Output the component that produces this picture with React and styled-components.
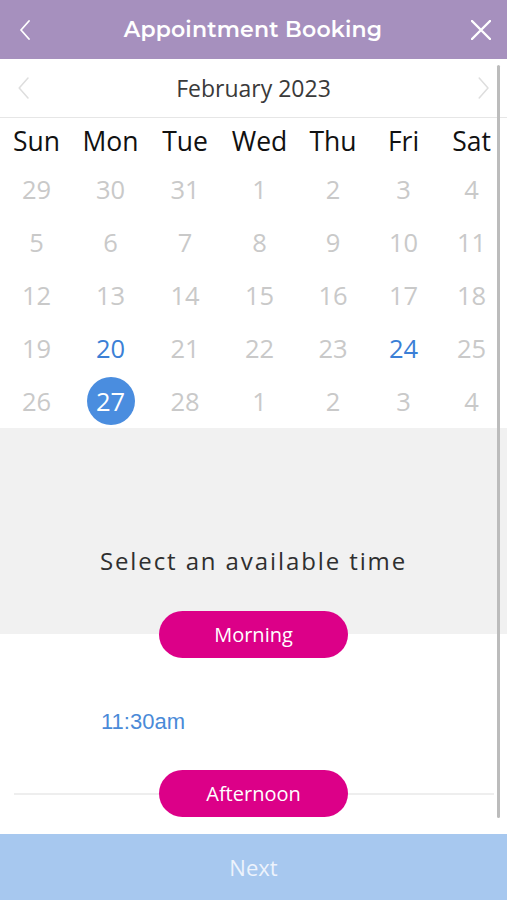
import React from "react";
import styled, { createGlobalStyle } from "styled-components";

const GlobalStyle = createGlobalStyle`
  html, body {
    margin: 0;
    padding: 0;
    background: #ffffff;
  }
  body {
    font-family: "Open Sans", "Liberation Sans", sans-serif;
  }
`;

const Screen = styled.div`
  position: relative;
  width: 507px;
  height: 900px;
  display: flex;
  flex-direction: column;
  overflow: hidden;
  background: #ffffff;
`;

const Header = styled.div`
  height: 59px;
  flex: none;
  display: flex;
  align-items: center;
  justify-content: space-between;
  padding: 0 14px 0 13px;
  background-color: #a690be;
  color: #ffffff;
`;

const HeaderTitle = styled.div`
  font-family: "Montserrat", "Lato", "Open Sans", sans-serif;
  font-size: 22px;
  font-weight: 600;
  letter-spacing: 0.2px;
`;

const IconButton = styled.div`
  width: 24px;
  height: 24px;
  display: flex;
  align-items: center;
  justify-content: center;
`;

const Body = styled.div`
  flex: none;
  display: flex;
  flex-direction: column;
`;

const MonthBar = styled.div`
  height: 58px;
  display: flex;
  align-items: center;
  justify-content: space-between;
  padding: 0 17px 0 17px;
  border-bottom: 1px solid #e6e6e6;
`;

const MonthLabel = styled.div`
  font-size: 23px;
  color: #3a3a3a;
`;

const Calendar = styled.div`
  display: grid;
  grid-template-columns: 73fr 75fr 74fr 75fr 72fr 69fr 67fr;
  width: 505px;
`;

const WeekDay = styled.div`
  height: 45px;
  display: flex;
  align-items: center;
  justify-content: center;
  font-size: 26.5px;
  color: #111111;
`;

const DayCell = styled.div`
  height: 52.8px;
  display: flex;
  align-items: center;
  justify-content: center;
`;

const DayNum = styled.div`
  width: 48px;
  height: 48px;
  border-radius: 50%;
  display: flex;
  align-items: center;
  justify-content: center;
  font-size: 25.5px;
  color: ${(p) => (p.$selected ? "#ffffff" : p.$available ? "#3b7fd6" : "#c9c9c9")};
  background: ${(p) => (p.$selected ? "#4a8ddf" : "transparent")};
`;

const TimeIntro = styled.div`
  margin-top: 1px;
  height: 206px;
  background: #f1f1f1;
  display: flex;
  align-items: flex-end;
  justify-content: center;
  padding-bottom: 57px;
  box-sizing: border-box;
  font-size: 24px;
  letter-spacing: 1.9px;
  color: #2f2f2f;
`;

const Section = styled.div`
  position: relative;
  display: flex;
  justify-content: center;
  margin-top: ${(p) => p.$offset || 0}px;
  &::before {
    content: "";
    display: ${(p) => (p.$line ? "block" : "none")};
    position: absolute;
    left: 14px;
    right: 13px;
    top: 50%;
    height: 2px;
    background: #eeeeee;
  }
`;

const Pill = styled.div`
  position: relative;
  width: 189px;
  height: 47px;
  border-radius: 24px;
  background: #dc0088;
  color: #ffffff;
  font-size: 20px;
  display: flex;
  align-items: center;
  justify-content: center;
`;

const TimeSlot = styled.div`
  height: 112px;
  padding-left: 101px;
  padding-top: 17px;
  display: flex;
  align-items: center;
  font-family: "Liberation Sans", Arial, sans-serif;
  font-size: 22px;
  color: #4a8ad8;
  box-sizing: border-box;
`;

const NextButton = styled.div`
  height: 66px;
  flex: none;
  margin-top: auto;
  background: #a7c8ef;
  color: #edf3fc;
  font-size: 22px;
  display: flex;
  align-items: center;
  justify-content: center;
`;

const ScrollThumb = styled.div`
  position: absolute;
  right: 7px;
  top: 65px;
  width: 3px;
  height: 753px;
  border-radius: 2px;
  background: #bcbcbc;
`;

const Chevron = ({ dir = "left", color, size = 20, width = 2 }) => (
  <svg width={size * 0.6} height={size} viewBox="0 0 12 20" fill="none">
    <path
      d={dir === "left" ? "M10 1 L2 10 L10 19" : "M2 1 L10 10 L2 19"}
      stroke={color}
      strokeWidth={width}
      strokeLinecap="round"
      strokeLinejoin="round"
    />
  </svg>
);

const weekDays = ["Sun", "Mon", "Tue", "Wed", "Thu", "Fri", "Sat"];
const weeks = [
  [29, 30, 31, 1, 2, 3, 4],
  [5, 6, 7, 8, 9, 10, 11],
  [12, 13, 14, 15, 16, 17, 18],
  [19, 20, 21, 22, 23, 24, 25],
  [26, 27, 28, 1, 2, 3, 4],
];

export default function App() {
  return (
    <>
      <GlobalStyle />
      <Screen>
        <Header>
          <IconButton>
            <Chevron dir="left" color="#ffffff" size={20} width={1.8} />
          </IconButton>
          <HeaderTitle>Appointment Booking</HeaderTitle>
          <IconButton>
            <svg width="20" height="20" viewBox="0 0 20 20">
              <path d="M1 1 L19 19 M19 1 L1 19" stroke="#ffffff" strokeWidth="2.4" strokeLinecap="round" />
            </svg>
          </IconButton>
        </Header>
        <Body>
          <MonthBar>
            <Chevron dir="left" color="#dedede" size={22} width={1.4} />
            <MonthLabel>February 2023</MonthLabel>
            <Chevron dir="right" color="#dedede" size={22} width={1.4} />
          </MonthBar>
          <Calendar>
            {weekDays.map((d) => (
              <WeekDay key={d}>{d}</WeekDay>
            ))}
            {weeks.map((week, wi) =>
              week.map((n, di) => (
                <DayCell key={`${wi}-${di}`}>
                  <DayNum
                    $selected={wi === 4 && n === 27}
                    $available={wi === 3 && (n === 20 || n === 24)}
                  >
                    {n}
                  </DayNum>
                </DayCell>
              ))
            )}
          </Calendar>
          <TimeIntro>Select an available time</TimeIntro>
          <Section $offset={-23}>
            <Pill>Morning</Pill>
          </Section>
          <TimeSlot>11:30am</TimeSlot>
          <Section $line>
            <Pill>Afternoon</Pill>
          </Section>
        </Body>
        <NextButton>Next</NextButton>
        <ScrollThumb />
      </Screen>
    </>
  );
}
